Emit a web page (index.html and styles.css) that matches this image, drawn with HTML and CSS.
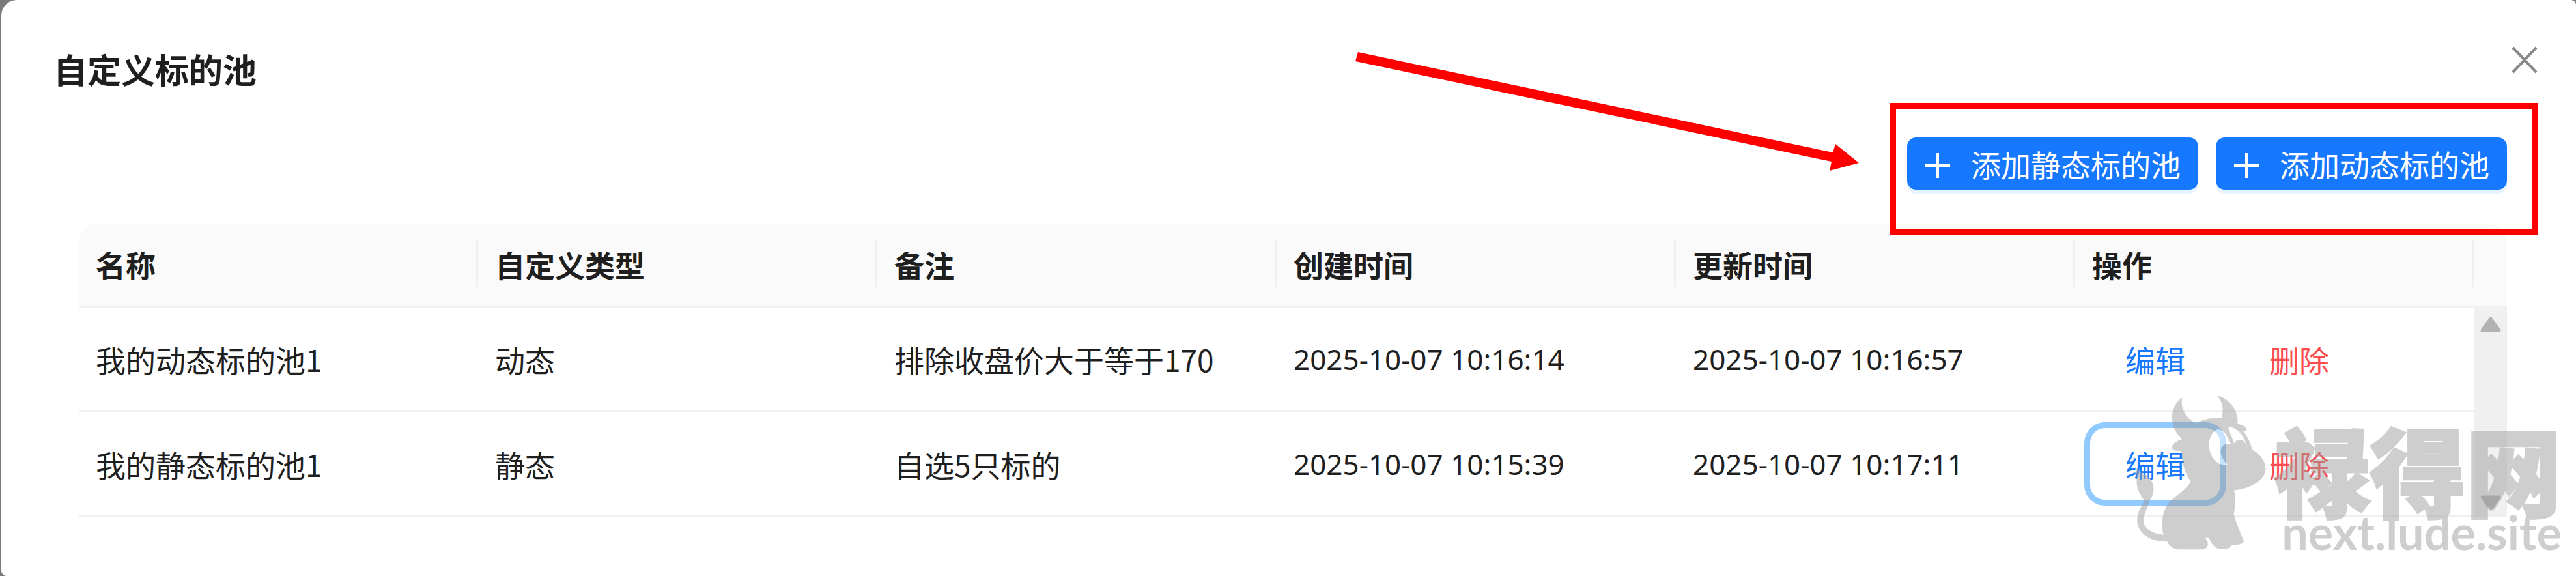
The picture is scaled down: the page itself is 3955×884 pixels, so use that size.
FILE: index.html
```html
<!DOCTYPE html>
<html lang="zh-CN">
<head>
  <meta charset="UTF-8">
  <title>自定义标的池</title>
  <link rel="stylesheet" href="styles.css">
</head>
<body>
  <main class="modal">
    <header class="modal-header">
      <h1>自定义标的池</h1>
      <button class="btn-close" aria-label="关闭">
        <svg viewBox="0 0 40 42"><path d="M2 2 38 40M38 2 2 40"/></svg>
      </button>
    </header>

    <div class="toolbar">
      <div class="actions">
        <button class="btn-add">
          <svg viewBox="0 0 40 40"><path d="M20 1v38M1 20h38"/></svg>
          添加静态标的池
        </button>
        <button class="btn-add">
          <svg viewBox="0 0 40 40"><path d="M20 1v38M1 20h38"/></svg>
          添加动态标的池
        </button>
        <div class="highlight"></div>
        <svg class="pointer" viewBox="0 0 774 182"><path d="M5 0 734 154 738 141 774 170 729 182 732 168 1 14Z"/></svg>
      </div>
    </div>

    <table>
      <thead>
        <tr>
          <th><span>名称</span></th>
          <th><span>自定义类型</span></th>
          <th><span>备注</span></th>
          <th><span>创建时间</span></th>
          <th><span>更新时间</span></th>
          <th><span>操作</span></th>
          <th class="gutter"></th>
        </tr>
      </thead>
      <tbody>
        <tr>
          <td>我的动态标的池1</td>
          <td>动态</td>
          <td>排除收盘价大于等于170</td>
          <td class="time">2025-10-07 10:16:14</td>
          <td class="time">2025-10-07 10:16:57</td>
          <td>
            <div class="row-actions">
              <button class="btn-link">编辑</button>
              <button class="btn-link danger">删除</button>
            </div>
          </td>
          <td class="scroll scroll-up"><svg viewBox="0 0 32 24"><path d="M16 3 29 21H3Z"/></svg></td>
        </tr>
        <tr>
          <td>我的静态标的池1</td>
          <td>静态</td>
          <td>自选5只标的</td>
          <td class="time">2025-10-07 10:15:39</td>
          <td class="time">2025-10-07 10:17:11</td>
          <td>
            <div class="row-actions">
              <button class="btn-link focused">编辑</button>
              <button class="btn-link danger">删除</button>
            </div>
          </td>
          <td class="scroll scroll-down"><svg viewBox="0 0 32 24"><path d="M16 21 29 3H3Z"/></svg></td>
        </tr>
      </tbody>
    </table>
  </main>

  <div class="watermark">
    <svg class="bull" viewBox="55 48 620 714">
      <path class="bull-body" fill-rule="evenodd" d="M287 61C255 82 240 116 240 157C242 194 258 229 288 252C262 258 242 273 237 293C245 304 262 307 282 306C286 365 300 415 327 447C302 489 257 511 229 540C197 578 186 635 200 692C157 689 108 665 108 627C111 592 130 563 136 536C166 495 160 446 124 420C99 405 79 395 66 376C84 408 73 439 79 469C85 497 98 514 109 530C111 552 79 580 79 625C79 684 138 726 216 722C229 745 248 760 274 760H378C410 758 413 724 390 705L407 704C424 735 434 756 464 757H487C502 756 512 750 516 738C539 740 574 737 570 718C553 680 534 635 524 596C533 561 533 524 526 487C585 484 671 447 671 387C670 350 640 318 610 301C600 267 588 239 567 216L582 212C591 199 567 185 541 182C551 122 501 63 447 51C475 82 479 120 467 156C425 152 387 159 352 178C305 158 277 117 287 61ZM456 207C484 213 497 247 511 275C476 265 451 297 471 336C478 353 488 363 495 370C447 378 411 330 411 280C411 239 432 208 456 207ZM499 196C531 192 583 239 586 300C582 269 574 256 551 255C537 255 530 264 526 273C519 243 502 220 499 196Z"/>
      <path class="bull-eye" d="M456 207C484 213 497 247 511 275C476 265 451 297 471 336C478 353 488 363 495 370C447 378 411 330 411 280C411 239 432 208 456 207Z"/>
    </svg>
    <div class="watermark-text">
      <span class="brand">禄得网</span>
      <span class="site">next.lude.site</span>
    </div>
  </div>
</body>
</html>
```
FILE: styles.css
```css
* {
  box-sizing: border-box;
}

body {
  margin: 0;
  min-height: 100vh;
  display: flex;
  background: #7b7b7b;
  font-family: 'Noto Sans CJK SC', sans-serif;
  font-size: 46px;
  line-height: 72px;
  color: #1f1f1f;
  overflow: hidden;
}

button {
  margin: 0;
  font: inherit;
  cursor: pointer;
}

svg {
  display: block;
}

.modal {
  flex: 1;
  margin-left: 2px;
  background: #fff;
  border-radius: 24px 8px 0 8px;
}

.modal-header {
  display: flex;
  justify-content: space-between;
  align-items: flex-start;
  padding: 66px 58px 0 80px;
}

h1 {
  margin: 0;
  font-size: 52px;
  line-height: 80px;
  font-weight: 700;
}

.btn-close {
  padding: 5px 0;
  border: none;
  background: none;
}

.btn-close svg {
  width: 42px;
  height: 42px;
  fill: none;
  stroke: #888;
  stroke-width: 4;
}

/* toolbar */
.toolbar {
  display: flex;
  justify-content: flex-end;
  padding: 65px 106px 53px;
}

.actions {
  position: relative;
  display: flex;
  gap: 27px;
}

.btn-add {
  display: flex;
  align-items: center;
  gap: 31px;
  height: 80px;
  padding: 0 27px;
  border: none;
  border-radius: 14px;
  background: #1677ff;
  color: #fff;
  box-shadow: 0 6px 0 #e6f4ff;
}

.btn-add svg {
  width: 40px;
  height: 40px;
  margin-top: 6px;
  stroke: #fff;
  stroke-width: 4;
}

.highlight {
  position: absolute;
  top: -53px;
  right: -48px;
  bottom: -70px;
  left: -27px;
  border: 10px solid #f00;
}

.pointer {
  position: absolute;
  top: -131px;
  right: calc(100% + 74px);
  width: 774px;
  height: 182px;
  fill: #f00;
}

/* table */
table {
  width: calc(100% - 225px);
  margin-left: 119px;
  table-layout: fixed;
  border-collapse: separate;
  border-spacing: 0;
}

th {
  padding: 25px 0 28px;
  background: #fafafa;
  border-bottom: 3px solid #f0f0f0;
  text-align: left;
  font-weight: 700;
}

th span {
  display: block;
  padding-left: 26px;
  border-right: 3px solid #f0f0f0;
}

th:first-child {
  border-top-left-radius: 27px;
}

.gutter {
  width: 50px;
  border-top-right-radius: 27px;
}

td {
  padding: 27px 0 27px 26px;
  border-bottom: 3px solid #f0f0f0;
}

.time {
  font-family: 'Noto Sans', sans-serif;
  font-size: 44px;
}

.row-actions {
  display: flex;
  gap: 27px;
}

.btn-link {
  height: 104px;
  padding: 0 51px;
  border: none;
  border-radius: 20px;
  background: none;
  color: #1677ff;
}

.btn-link.danger {
  color: #ff4d4f;
}

.btn-link.focused {
  outline: 9px solid #91caff;
  outline-offset: 3px;
}

.scroll {
  padding: 14px 9px 10px;
  border: none;
  background: #f0f0f0;
}

.scroll svg {
  width: 32px;
  height: 24px;
  fill: #b2b2b2;
  stroke: #b2b2b2;
  stroke-width: 5;
  stroke-linejoin: round;
}

.scroll-up {
  vertical-align: top;
}

.scroll-down {
  vertical-align: bottom;
}

/* watermark */
.watermark {
  position: absolute;
  right: 22px;
  bottom: 40px;
  display: flex;
  align-items: flex-end;
  gap: 12px;
  color: #9b9b9b;
  opacity: 0.48;
  pointer-events: none;
}

.bull {
  width: 207px;
  height: 238px;
}

.bull-body {
  fill: #9b9b9b;
}

.bull-eye {
  fill: #fff;
}

.watermark-text {
  display: flex;
  flex-direction: column;
  align-items: flex-end;
}

.brand {
  font-size: 147px;
  line-height: 140px;
  font-weight: 900;
  -webkit-text-stroke: 4px #9b9b9b;
}

.site {
  font-family: Lato, sans-serif;
  font-size: 72px;
  line-height: 56px;
  font-weight: 700;
}
```
